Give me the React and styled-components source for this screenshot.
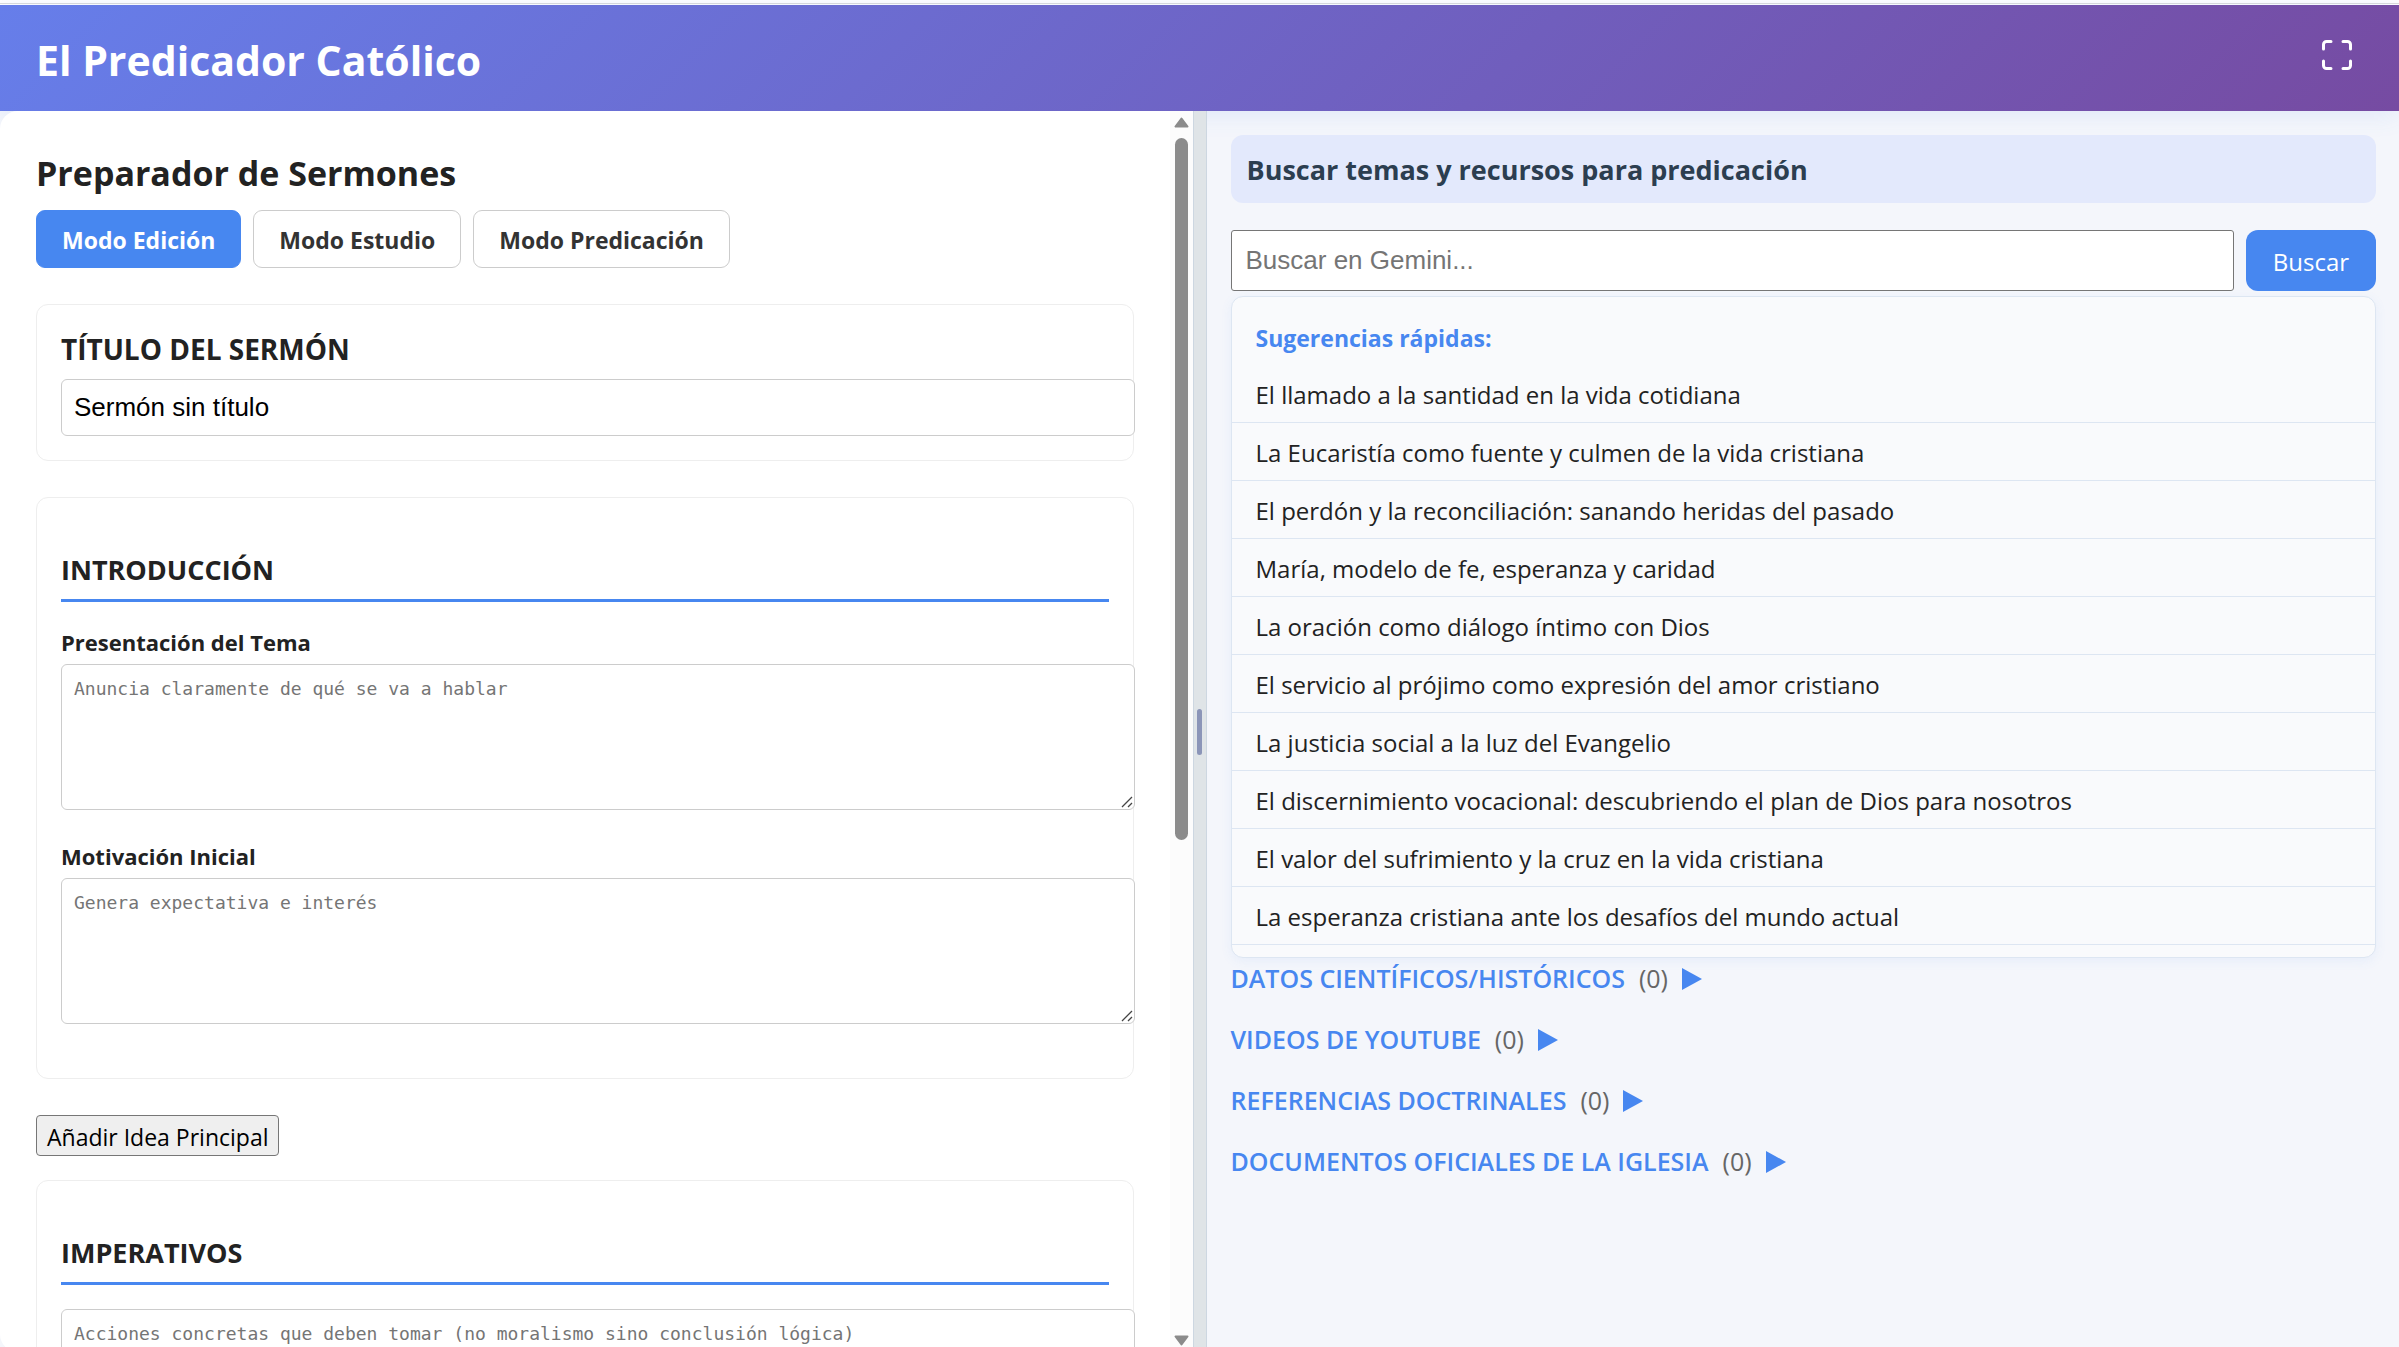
import React, { useState } from "react";
import styled, { createGlobalStyle } from "styled-components";

const blue = "#4787f0";
const ui = `"Segoe UI", "Open Sans", "Noto Sans", sans-serif`;
const arial = `"Liberation Sans", Arial, sans-serif`;
const mono = `"DejaVu Sans Mono", monospace`;

const GlobalStyle = createGlobalStyle`
  *, *::before, *::after { box-sizing: border-box; }
  body {
    margin: 0;
    background: #f4f6fb;
    color: #222;
    font: 23px/32px ${ui};
  }
  h1, h2, h3, p, ul { margin: 0; padding: 0; }
  button, input, textarea { margin: 0; }
`;

const Page = styled.div`
  display: flex;
  flex-direction: column;
  height: 100vh;
  overflow: hidden;
`;

const WindowEdge = styled.div`
  flex: none;
  height: 5px;
  background: #fff;
  border-top: 3px solid #fff;
  &::after {
    content: "";
    display: block;
    height: 1px;
    background: #dcdcdc;
  }
`;

const Header = styled.header`
  flex: none;
  display: flex;
  align-items: center;
  justify-content: space-between;
  height: 106px;
  padding: 4px 36px 0;
  background: linear-gradient(135deg, #667eea 0%, #764ba2 100%);
  box-shadow: 0 3px 24px rgba(71, 135, 240, 0.12);
`;

const AppTitle = styled.h1`
  color: #fff;
  font-size: 41px;
  line-height: 56px;
  font-weight: 700;
`;

const IconButton = styled.button`
  display: flex;
  padding: 8px;
  margin-bottom: 10px;
  border: 0;
  background: none;
  color: #fff;
`;

const Panels = styled.div`
  flex: 1;
  min-height: 0;
  margin-bottom: -5px;
  display: grid;
  grid-template-columns: minmax(0, 1fr) 14px minmax(0, 1fr);
`;

const Editor = styled.main`
  position: relative;
  display: flex;
  min-height: 0;
  background: #fff;
  border-radius: 18px 0 0 18px;
  overflow: hidden;
`;

const EditorBody = styled.div`
  flex: 1;
  min-width: 0;
  height: 100%;
  overflow: hidden;
  padding: 36px 36px 0;
`;

const PanelTitle = styled.h2`
  font-size: 34px;
  line-height: 52px;
  font-weight: 700;
`;

const Modes = styled.div`
  display: flex;
  gap: 12px;
  margin: 11px 0 36px;
`;

const ModeButton = styled.button`
  height: 58px;
  padding: 2px 25px 0;
  border: 1px solid ${(p) => (p.$active ? blue : "#ccc")};
  border-radius: 9px;
  background: ${(p) => (p.$active ? blue : "#fff")};
  color: ${(p) => (p.$active ? "#fff" : "#333")};
  font: 700 23px/32px ${ui};
`;

const Card = styled.section`
  padding: ${(p) => (p.$compact ? "24px" : "48px 24px 54px")};
  margin-bottom: 36px;
  border: 1px solid #eee;
  border-radius: 12px;
  background: #fff;
`;

const TitleLabel = styled.label`
  display: block;
  margin-bottom: 10px;
  font-size: 28px;
  line-height: 40px;
  font-weight: 700;
`;

const CardTitle = styled.h3`
  padding-bottom: 5px;
  border-bottom: 3px solid ${blue};
  font-size: 27px;
  line-height: 48px;
  font-weight: 700;
`;

const TextInput = styled.input`
  display: block;
  width: calc(100% + 26px);
  height: 57px;
  padding: 0 12px;
  border: 1px solid #ccc;
  border-radius: 6px;
  background: #fff;
  color: #000;
  font: 26px/32px ${arial};
`;

const Field = styled.div`
  margin-top: 24px;
`;

const FieldLabel = styled.label`
  display: block;
  margin-bottom: 5px;
  font-size: 22px;
  line-height: 33px;
  font-weight: 700;
`;

const AreaWrap = styled.div`
  position: relative;
  width: calc(100% + 26px);
  margin-bottom: ${(p) => (p.$last ? "0" : "30px")};
`;

const Area = styled.textarea`
  display: block;
  width: 100%;
  height: 146px;
  padding: 12px;
  border: 1px solid #ccc;
  border-radius: 6px;
  background: #fff;
  font: 18px/24px ${mono};
  resize: none;
  &::placeholder { color: #757575; }
`;

const Grip = styled.svg`
  position: absolute;
  right: 2px;
  bottom: 2px;
`;

const AddButton = styled.button`
  display: block;
  height: 41px;
  padding: 3px 10px 0;
  margin-bottom: 24px;
  border: 1px solid #767676;
  border-radius: 4px;
  background: #efefef;
  color: #000;
  font: 23px/32px ${ui};
`;

const Scrollbar = styled.div`
  flex: none;
  display: flex;
  flex-direction: column;
  align-items: center;
  width: 23px;
  padding: 6px 0;
  background: #fcfcfc;
`;

const Track = styled.div`
  flex: 1;
  width: 13px;
  margin: 10px 0 8px;
`;

const Thumb = styled.div`
  height: 59%;
  border-radius: 7px;
  background: #8b8b8b;
`;

const Divider = styled.div`
  display: flex;
  align-items: center;
  justify-content: center;
  border: solid #cdd7e1;
  border-width: 0 1px;
  background: #dfe4e7;
  &::after {
    content: "";
    width: 5px;
    height: 46px;
    border-radius: 3px;
    background: #8b95b8;
  }
`;

const Resources = styled.aside`
  min-width: 0;
  padding: 24px 23px 0 24px;
`;

const ResourcesTitle = styled.h2`
  margin-bottom: 27px;
  padding: 17px 16px 15px;
  border-radius: 12px;
  background: #e3e9fc;
  color: #2c3e50;
  font-size: 27px;
  line-height: 36px;
  font-weight: 700;
`;

const SearchRow = styled.form`
  display: flex;
  gap: 12px;
  margin-bottom: 5px;
`;

const SearchInput = styled.input`
  flex: 1;
  min-width: 0;
  height: 61px;
  padding: 0 14px;
  border: 1px solid #767676;
  border-radius: 3px;
  background: #fff;
  font: 26px/32px ${arial};
  &::placeholder { color: #757575; opacity: 1; }
`;

const SearchButton = styled.button`
  width: 130px;
  padding: 2px 0 0;
  border: 0;
  border-radius: 12px;
  background: ${blue};
  color: #fff;
  font: 24px/32px ${ui};
`;

const Suggestions = styled.section`
  padding: 24px 0 12px;
  border: 1px solid #dde6f2;
  border-radius: 12px;
  background: #f9fafc;
  box-shadow: 0 3px 12px rgba(71, 135, 240, 0.08);
`;

const SuggestionsTitle = styled.h3`
  padding: 0 24px;
  margin-bottom: 9px;
  color: ${blue};
  font-size: 23px;
  line-height: 35px;
  font-weight: 700;
`;

const List = styled.ul`
  list-style: none;
`;

const Suggestion = styled.li`
  height: 58px;
  padding: 2px 24px 0;
  border-bottom: 1px solid #dde6f2;
  font-size: 24px;
  line-height: 55px;
  white-space: nowrap;
`;

const Group = styled.button`
  display: flex;
  align-items: center;
  gap: 14px;
  height: 37px;
  padding: 0;
  margin: 2px 0 24px;
  border: 0;
  background: none;
  color: ${blue};
  font: 600 25px/37px ${ui};
`;

const Count = styled.span`
  color: #666;
  font-weight: 400;
  font-size: 25px;
`;

const suggestions = [
  "El llamado a la santidad en la vida cotidiana",
  "La Eucaristía como fuente y culmen de la vida cristiana",
  "El perdón y la reconciliación: sanando heridas del pasado",
  "María, modelo de fe, esperanza y caridad",
  "La oración como diálogo íntimo con Dios",
  "El servicio al prójimo como expresión del amor cristiano",
  "La justicia social a la luz del Evangelio",
  "El discernimiento vocacional: descubriendo el plan de Dios para nosotros",
  "El valor del sufrimiento y la cruz en la vida cristiana",
  "La esperanza cristiana ante los desafíos del mundo actual",
];

const groups = [
  "DATOS CIENTÍFICOS/HISTÓRICOS",
  "VIDEOS DE YOUTUBE",
  "REFERENCIAS DOCTRINALES",
  "DOCUMENTOS OFICIALES DE LA IGLESIA",
];

const modes = ["Modo Edición", "Modo Estudio", "Modo Predicación"];

function TextArea({ last, ...rest }) {
  return (
    <AreaWrap $last={last}>
      <Area {...rest} />
      <Grip width="12" height="12" viewBox="0 0 12 12" fill="none" stroke="#444" strokeWidth="1.3" aria-hidden="true">
        <path d="M1 11 11 1M7 11l4-4" />
      </Grip>
    </AreaWrap>
  );
}

function Arrow({ down }) {
  return (
    <svg width="15" height="11" viewBox="0 0 15 11" fill="#8b8b8b" stroke="#8b8b8b" strokeWidth="2" strokeLinejoin="round" aria-hidden="true">
      <path d={down ? "M1.5 1.5h12L7.5 9.5z" : "M1.5 9.5h12L7.5 1.5z"} />
    </svg>
  );
}

export default function App() {
  const [mode, setMode] = useState(modes[0]);
  const [title, setTitle] = useState("Sermón sin título");
  return (
    <Page>
      <GlobalStyle />
      <WindowEdge />
      <Header>
        <AppTitle>El Predicador Católico</AppTitle>
        <IconButton type="button" aria-label="Pantalla completa">
          <svg width="36" height="36" viewBox="0 0 24 24" fill="none" stroke="currentColor" strokeWidth="2" strokeLinecap="round" strokeLinejoin="round">
            <path d="M8 3H5a2 2 0 0 0-2 2v3m18 0V5a2 2 0 0 0-2-2h-3m0 18h3a2 2 0 0 0 2-2v-3M3 16v3a2 2 0 0 0 2 2h3" />
          </svg>
        </IconButton>
      </Header>
      <Panels>
        <Editor>
          <EditorBody>
            <PanelTitle>Preparador de Sermones</PanelTitle>
            <Modes>
              {modes.map((m) => (
                <ModeButton key={m} type="button" $active={m === mode} onClick={() => setMode(m)}>
                  {m}
                </ModeButton>
              ))}
            </Modes>
            <Card $compact>
              <TitleLabel htmlFor="titulo">TÍTULO DEL SERMÓN</TitleLabel>
              <TextInput id="titulo" value={title} onChange={(e) => setTitle(e.target.value)} />
            </Card>
            <Card>
              <CardTitle>INTRODUCCIÓN</CardTitle>
              <Field>
                <FieldLabel htmlFor="tema">Presentación del Tema</FieldLabel>
                <TextArea id="tema" placeholder="Anuncia claramente de qué se va a hablar" />
              </Field>
              <Field>
                <FieldLabel htmlFor="motivacion">Motivación Inicial</FieldLabel>
                <TextArea id="motivacion" placeholder="Genera expectativa e interés" last />
              </Field>
            </Card>
            <AddButton type="button">Añadir Idea Principal</AddButton>
            <Card>
              <CardTitle id="imperativos">IMPERATIVOS</CardTitle>
              <Field>
                <TextArea
                  aria-labelledby="imperativos"
                  placeholder="Acciones concretas que deben tomar (no moralismo sino conclusión lógica)"
                  last
                />
              </Field>
            </Card>
          </EditorBody>
          <Scrollbar aria-hidden="true">
            <Arrow />
            <Track>
              <Thumb />
            </Track>
            <Arrow down />
          </Scrollbar>
        </Editor>
        <Divider />
        <Resources>
          <ResourcesTitle>Buscar temas y recursos para predicación</ResourcesTitle>
          <SearchRow onSubmit={(e) => e.preventDefault()}>
            <SearchInput aria-label="Buscar en Gemini" placeholder="Buscar en Gemini..." />
            <SearchButton type="submit">Buscar</SearchButton>
          </SearchRow>
          <Suggestions>
            <SuggestionsTitle>Sugerencias rápidas:</SuggestionsTitle>
            <List>
              {suggestions.map((s) => (
                <Suggestion key={s}>{s}</Suggestion>
              ))}
            </List>
          </Suggestions>
          {groups.map((g) => (
            <Group key={g} type="button">
              {g}
              <Count>(0)</Count>
              <svg width="20" height="22" viewBox="0 0 20 22" fill="currentColor" aria-hidden="true">
                <path d="M0 0 20 11 0 22z" />
              </svg>
            </Group>
          ))}
        </Resources>
      </Panels>
    </Page>
  );
}
